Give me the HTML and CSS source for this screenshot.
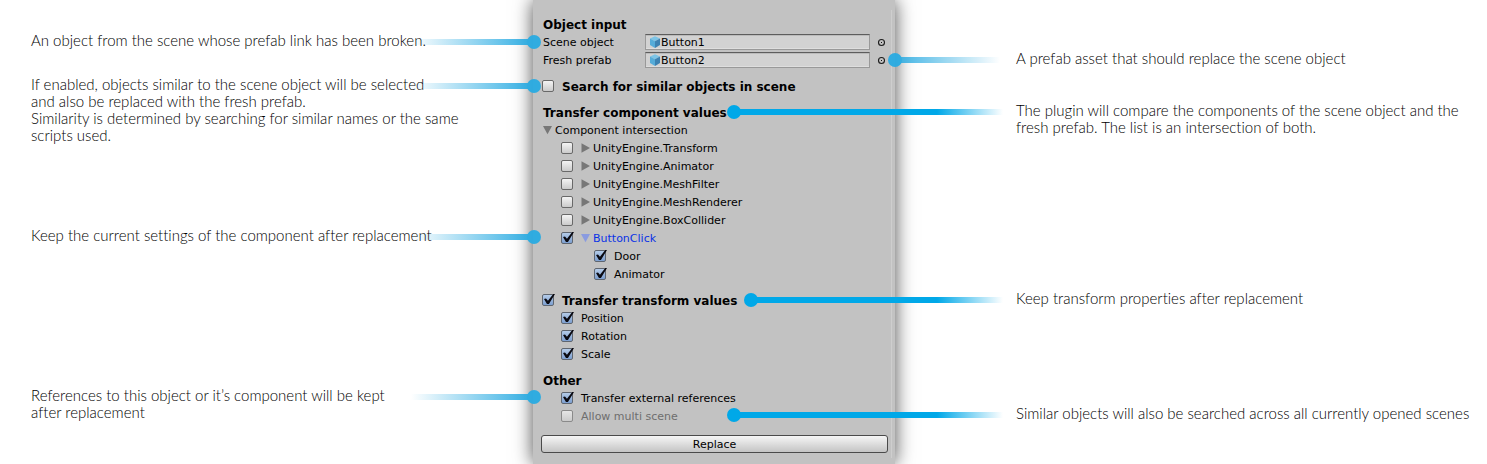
FILE: index.html
```html
<!DOCTYPE html>
<html lang="en">
<head>
<meta charset="utf-8">
<meta name="viewport" content="width=device-width, initial-scale=1">
<title>Prefab replacement</title>
<link rel="stylesheet" href="styles.css">
</head>
<body>
<svg class="defs" width="0" height="0" aria-hidden="true">
  <symbol id="cube" viewBox="0 0 12 12">
    <path d="M6 .3 11 2.6 6 5.2 1 2.6Z" fill="#7cc4e6"/>
    <path d="M1 2.6 6 5.2V11.9L1 9Z" fill="#55acd9"/>
    <path d="M11 2.6 6 5.2V11.9L11 9Z" fill="#3d82b2"/>
  </symbol>
  <symbol id="picker" viewBox="0 0 9 9">
    <circle cx="4.5" cy="4.5" r="3" fill="none" stroke="#1c1c1c" stroke-width="1.1"/>
    <rect x="4" y="4" width="1" height="1" fill="#111"/>
  </symbol>
  <symbol id="closed" viewBox="0 0 9 10"><path d="M.5 .3 9 5 .5 9.7Z" fill="currentColor"/></symbol>
  <symbol id="open" viewBox="0 0 9 10"><path d="M0 1H9L4.5 9.3Z" fill="currentColor"/></symbol>
</svg>

<main class="guide">
  <section class="notes notes-left">
    <p class="note note-scene">An object from the scene whose prefab link has been broken.<i class="pin"></i></p>
    <p class="note note-search">If enabled, objects similar to the scene object will be selected<br>and also be replaced with the fresh prefab.<br>Similarity is determined by searching for similar names or the same<br>scripts used.<i class="pin"></i></p>
    <p class="note note-keep">Keep the current settings of the component after replacement<i class="pin"></i></p>
    <p class="note note-refs">References to this object or it’s component will be kept<br>after replacement<i class="pin"></i></p>
  </section>

  <form class="panel">
    <section class="group">
      <h2 class="row title">Object input</h2>
      <div class="row field">
        <label class="field-label" for="scene">Scene object</label>
        <span class="object"><svg class="cube"><use href="#cube"/></svg><input id="scene" class="object-name" type="text" value="Button1"></span>
        <button class="picker" type="button" aria-label="Pick scene object"><svg><use href="#picker"/></svg></button>
      </div>
      <div class="row field">
        <label class="field-label" for="prefab">Fresh prefab</label>
        <span class="object"><svg class="cube"><use href="#cube"/></svg><input id="prefab" class="object-name" type="text" value="Button2"></span>
        <button class="picker" type="button" aria-label="Pick fresh prefab"><svg><use href="#picker"/></svg></button>
      </div>
    </section>

    <section class="group">
      <label class="row check title"><input type="checkbox">Search for similar objects in scene</label>
    </section>

    <section class="group">
      <h2 class="row title">Transfer component values</h2>
      <div class="row"><button class="foldout" type="button" aria-expanded="true"><svg><use href="#open"/></svg>Component intersection</button></div>
      <div class="row check level-1"><input type="checkbox" aria-label="Transfer UnityEngine.Transform"><button class="foldout" type="button"><svg><use href="#closed"/></svg>UnityEngine.Transform</button></div>
      <div class="row check level-1"><input type="checkbox" aria-label="Transfer UnityEngine.Animator"><button class="foldout" type="button"><svg><use href="#closed"/></svg>UnityEngine.Animator</button></div>
      <div class="row check level-1"><input type="checkbox" aria-label="Transfer UnityEngine.MeshFilter"><button class="foldout" type="button"><svg><use href="#closed"/></svg>UnityEngine.MeshFilter</button></div>
      <div class="row check level-1"><input type="checkbox" aria-label="Transfer UnityEngine.MeshRenderer"><button class="foldout" type="button"><svg><use href="#closed"/></svg>UnityEngine.MeshRenderer</button></div>
      <div class="row check level-1"><input type="checkbox" aria-label="Transfer UnityEngine.BoxCollider"><button class="foldout" type="button"><svg><use href="#closed"/></svg>UnityEngine.BoxCollider</button></div>
      <div class="row check level-1"><input type="checkbox" checked aria-label="Transfer ButtonClick"><button class="foldout selected" type="button" aria-expanded="true"><svg><use href="#open"/></svg>ButtonClick</button></div>
      <label class="row check level-2"><input type="checkbox" checked>Door</label>
      <label class="row check level-2"><input type="checkbox" checked>Animator</label>
    </section>

    <section class="group">
      <label class="row check title"><input type="checkbox" checked>Transfer transform values</label>
      <label class="row check level-1"><input type="checkbox" checked>Position</label>
      <label class="row check level-1"><input type="checkbox" checked>Rotation</label>
      <label class="row check level-1"><input type="checkbox" checked>Scale</label>
    </section>

    <section class="group">
      <h2 class="row title">Other</h2>
      <label class="row check level-1"><input type="checkbox" checked>Transfer external references</label>
      <label class="row check level-1 disabled"><input type="checkbox" disabled>Allow multi scene</label>
    </section>

    <button class="replace" type="button">Replace</button>
  </form>

  <section class="notes notes-right">
    <p class="note note-prefab">A prefab asset that should replace the scene object<i class="pin"></i></p>
    <p class="note note-compare">The plugin will compare the components of the scene object and the<br>fresh prefab. The list is an intersection of both.<i class="pin pin-long"></i></p>
    <p class="note note-transform">Keep transform properties after replacement<i class="pin pin-long pin-near"></i></p>
    <p class="note note-multi">Similar objects will also be searched across all currently opened scenes<i class="pin pin-long"></i></p>
  </section>
</main>
</body>
</html>
```

FILE: styles.css
```css
* {
  box-sizing: border-box;
}

body {
  margin: 0;
  background: #fff;
}

.defs {
  position: absolute;
}

.guide {
  display: grid;
  grid-template-columns: 533fr 362px 592fr;
  min-height: 100vh;
  overflow: hidden;
}

/* Notes beside the panel */

.notes {
  position: relative;
  z-index: 1;
  display: flex;
  flex-direction: column;
  pointer-events: none;
}

.notes-left {
  padding-left: 31px;
}

.notes-right {
  padding-left: 121px;
}

.note {
  position: relative;
  margin: 0;
  color: #000;
  font: 300 15px/17px Lato, "Open Sans", sans-serif;
  font-variant-ligatures: none;
  white-space: nowrap;
}

.note-scene { margin-top: 32px; }
.note-search { margin-top: 27px; }
.note-keep { margin-top: 83px; }
.note-refs { margin-top: 143px; }
.note-prefab { margin-top: 50px; }
.note-compare { margin-top: 35px; }
.note-transform { margin-top: 154px; }
.note-multi { margin-top: 98px; }

/* Line with a round end that points from a note to the panel */

.pin {
  position: absolute;
  z-index: -1;
  top: 3px;
  right: -8px;
  width: 130px;
  height: 14px;
  background: linear-gradient(to right, transparent, #29abe2 120px) 0 4px / 120px 6px no-repeat;
  opacity: 0.95;
}

.pin::after {
  content: "";
  position: absolute;
  top: 0;
  right: 0;
  width: 14px;
  height: 14px;
  border-radius: 50%;
  background: #29abe2;
}

.notes-right .pin {
  right: auto;
  left: -128px;
  width: 120px;
  background: linear-gradient(to left, transparent, #29abe2 110px) 7px 4px / 105px 6px no-repeat;
}

.notes-right .pin::after {
  right: auto;
  left: 0;
}

.notes-right .pin-long {
  left: -289px;
  width: 276px;
  background: linear-gradient(to left, transparent, #00a8e8 66px) 7px 4px / 269px 6px no-repeat;
  opacity: 1;
}

.notes-right .pin-near {
  left: -272px;
  width: 259px;
  background-size: 252px 6px;
}

.notes-right .pin-long::after {
  background: #00a8e8;
}

/* Inspector panel */

.panel {
  position: relative;
  display: flex;
  flex-direction: column;
  padding: 16px 7px 11px 8px;
  background: #c2c2c2;
  color: #000;
  font: 11px/18px "DejaVu Sans", sans-serif;
  isolation: isolate;
  box-shadow: 0 0 18px rgba(0, 0, 0, 0.7);
}

.panel::after {
  content: "";
  position: absolute;
  top: 10px;
  right: 3px;
  bottom: 6px;
  width: 1px;
  background: #cecece;
}

.group {
  margin-bottom: 8px;
  padding-left: 2px;
}

.row {
  display: flex;
  align-items: center;
  height: 18px;
}

.title {
  margin: 0;
  font-size: 12px;
  font-weight: bold;
  line-height: 16px;
}

.field-label {
  width: 102px;
}

.object {
  display: flex;
  flex: 1;
  align-items: center;
  height: 16px;
  margin-bottom: 2px;
  padding-left: 3px;
  border: 1px solid #999;
  border-top-color: #5d5d5d;
  background: #d2d2d2;
  box-shadow: inset 0 -1px #dedede, inset 0 1px #bbb;
}

.cube {
  flex: none;
  width: 12px;
  height: 12px;
}

.object-name {
  flex: 1;
  min-width: 0;
  height: 14px;
  padding: 2px 0 0;
  border: 0;
  background: none;
  color: inherit;
  font: inherit;
}

.picker {
  display: flex;
  margin: 0 2px 2px 7px;
  padding: 0;
  border: 0;
  background: none;
}

.picker svg {
  width: 9px;
  height: 9px;
}

.check {
  gap: 8px;
  margin-left: -1px;
}

.level-1 {
  margin-left: 18px;
}

.level-2 {
  margin-left: 51px;
}

.check input {
  position: relative;
  appearance: none;
  flex: none;
  width: 12px;
  height: 12px;
  margin: 0 0 2px;
  border: 1px solid #696969;
  border-radius: 2px;
  background: linear-gradient(#f4f4f4, #cbcbcb);
}

.check input:checked {
  border-color: #5f6670;
  background: linear-gradient(#b4cbe8, #7d9fd0);
}

.check input:checked::after {
  content: "";
  position: absolute;
  top: -1px;
  left: 1px;
  width: 11px;
  height: 10px;
  background: #0a0a12;
  clip-path: polygon(0 50%, 18% 45%, 36% 68%, 84% 0, 100% 0, 45% 100%, 27% 100%);
}

.check input:disabled {
  border-color: #8a8a8a;
  background: linear-gradient(#e6e6e6, #cbcbcb);
}

.disabled {
  color: #6e6e6e;
}

.foldout {
  display: flex;
  align-items: center;
  gap: 3px;
  padding: 0;
  border: 0;
  background: none;
  color: inherit;
  font: inherit;
}

.foldout svg {
  width: 9px;
  height: 10px;
  margin-bottom: 2px;
  color: #777;
}

.selected {
  color: #0a32e6;
}

.selected svg {
  color: #8a9be0;
}

.replace {
  height: 18px;
  margin-top: 1px;
  padding: 2px 0 0;
  border: 1px solid #4a4a4a;
  border-radius: 3px;
  background: linear-gradient(#f6f6f6, #c4c4c4);
  color: #000;
  font: 11px/14px "DejaVu Sans", sans-serif;
}
```
